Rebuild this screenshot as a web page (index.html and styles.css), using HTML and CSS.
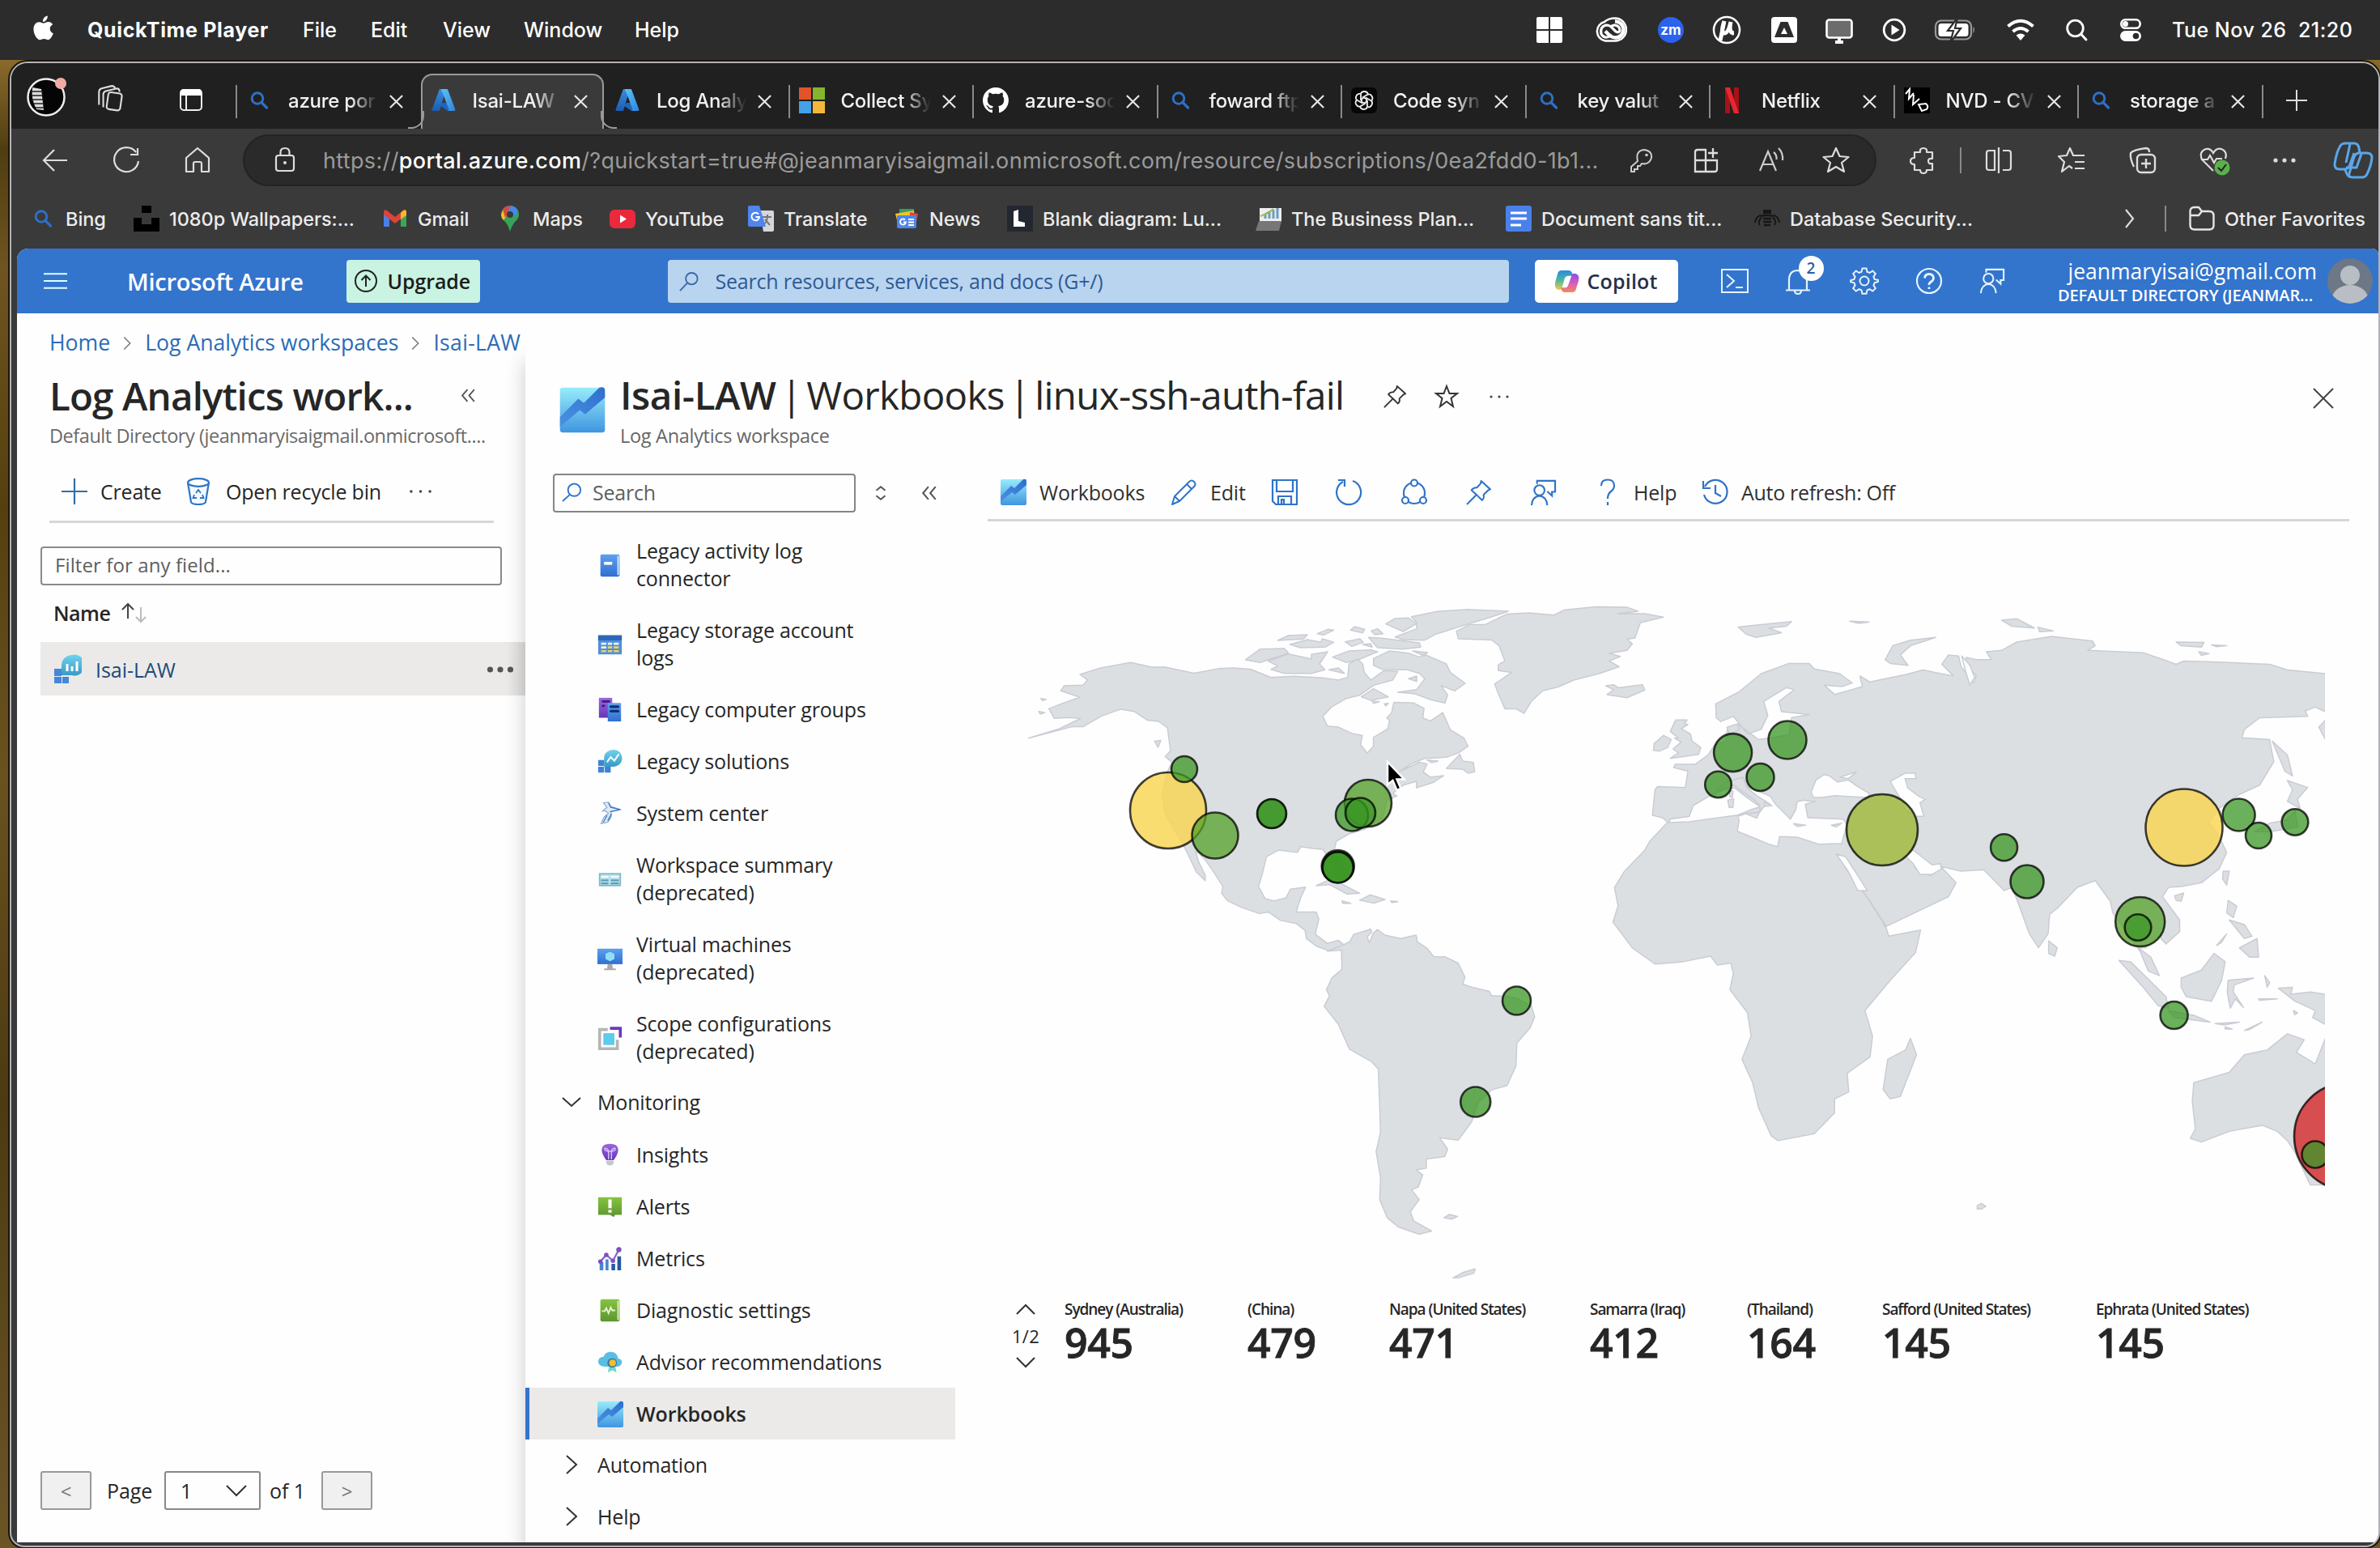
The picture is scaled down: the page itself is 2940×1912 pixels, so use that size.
FILE: index.html
```html
<!DOCTYPE html>
<html lang="en">
<head>
<meta charset="utf-8">
<title>Isai-LAW | Workbooks - Microsoft Azure</title>
<link rel="stylesheet" href="styles.css">
</head>
<body>
<svg class="defs" width="0" height="0" aria-hidden="true">
  <defs>
    <linearGradient id="wbg" x1="0" y1="0" x2="0" y2="1"><stop offset="0" stop-color="#97ecfb"/><stop offset="1" stop-color="#3f95e0"/></linearGradient>
    <linearGradient id="wbl" x1="1" y1="0" x2="0" y2="1"><stop offset="0" stop-color="#2f6fd0"/><stop offset="1" stop-color="#4a92e0"/></linearGradient>
    <linearGradient id="azl" x1="0" y1="0" x2="0" y2="1"><stop offset="0" stop-color="#3a8ee0"/><stop offset="1" stop-color="#1b5cb0"/></linearGradient>
    <linearGradient id="azr" x1="0" y1="0" x2="1" y2="1"><stop offset="0" stop-color="#5ec3f4"/><stop offset="1" stop-color="#2f83dd"/></linearGradient>
    <linearGradient id="blu" x1="0" y1="0" x2="0" y2="1"><stop offset="0" stop-color="#5ea0ef"/><stop offset="1" stop-color="#2f6fd0"/></linearGradient>
    <linearGradient id="cyn" x1="0" y1="0" x2="0" y2="1"><stop offset="0" stop-color="#6fd3ef"/><stop offset="1" stop-color="#389ac4"/></linearGradient>
    <linearGradient id="grn" x1="0" y1="0" x2="0" y2="1"><stop offset="0" stop-color="#86c440"/><stop offset="1" stop-color="#5d9431"/></linearGradient>
    <linearGradient id="pur" x1="0" y1="0" x2="0" y2="1"><stop offset="0" stop-color="#9a66e0"/><stop offset="1" stop-color="#6437b8"/></linearGradient>
    <linearGradient id="cop1" x1="0" y1="0" x2="0" y2="1"><stop offset="0" stop-color="#2b8be0"/><stop offset=".5" stop-color="#49b8a0"/><stop offset="1" stop-color="#f5cc4a"/></linearGradient>
    <linearGradient id="cop2" x1="0" y1="0" x2="0" y2="1"><stop offset="0" stop-color="#8a4fe8"/><stop offset=".5" stop-color="#d65bc0"/><stop offset="1" stop-color="#f48a5a"/></linearGradient>
    <symbol id="x" viewBox="0 0 20 20"><path d="M2 2 18 18M18 2 2 18" fill="none" stroke="#e8e8e8" stroke-width="2.2"/></symbol>
    <symbol id="mag" viewBox="0 0 22 22"><circle cx="9" cy="8.500" r="6.800" fill="none" stroke="#2f6fc4" stroke-width="3"/><path d="M14 13.500 20.500 20" stroke="#2f6fc4" stroke-width="3.200" stroke-linecap="round"/></symbol>
    <symbol id="az" viewBox="0 0 30 30"><path d="M10 1h8L10 28H2Q0 28 .7 25.800Z" fill="url(#azl)"/><path d="M14 18H24L27 28H20L10 21Z" fill="#1d66c0"/><path d="M12 1h7q1 0 1.400 1.200L29.300 26Q30 28 28 28H20.500Q22 27.500 21.300 25.500Z" fill="url(#azr)"/></symbol>
    <symbol id="wb" viewBox="0 0 34 34"><rect x="1" y="1" width="32" height="32" rx="2" fill="url(#wbg)"/><path d="M1 22 14 9 18 12 29 1Q33 0 33 3V8L19 20 15 17 1 29Z" fill="url(#wbl)"/></symbol>
    <symbol id="chr" viewBox="0 0 16 24"><path d="M3 2 13 12 3 22" fill="none" stroke="currentColor" stroke-width="2"/></symbol>
    <symbol id="dbl" viewBox="0 0 18 18"><path d="M8 2 2 9l6 7M16 2l-6 7 6 7" fill="none" stroke="#555" stroke-width="1.800"/></symbol>
    <symbol id="pin" viewBox="0 0 32 32"><path d="M19 2 30 12 27 13.500 22 18.500Q23 23 20 25L14.500 19.500 7.500 13Q10 9.500 14 10L18.500 5Z" fill="none" stroke="currentColor" stroke-width="2" stroke-linejoin="round"/><path d="M13 19 2 30" stroke="currentColor" stroke-width="2"/></symbol>
    <symbol id="fb" viewBox="0 0 34 34"><circle cx="12" cy="14" r="6.500" fill="none" stroke="currentColor" stroke-width="2.200"/><path d="M2 33Q3 22 12 21 21 22 22 33M9 6V2H32V16H28V21L22 15.500" fill="none" stroke="currentColor" stroke-width="2.200"/></symbol>
  </defs>
</svg>

<header class="menubar">
  <svg class="apple" viewBox="0 0 28 32"><path fill="#fff" d="M19.500 0c.2 2.300-.7 4.200-1.900 5.500-1.200 1.400-2.900 2.200-4.300 2-.2-2.200.8-4.100 1.900-5.300C16.400.9 18.200.1 19.500 0ZM26 11c-2.500 1.500-3.600 3.200-3.500 5.600.1 2.800 1.600 4.800 4.200 5.900-1 2.900-3.600 8.200-6.600 8.200-1.900 0-2.700-1.200-5.200-1.200-2.400 0-3.400 1.200-5.200 1.200C6 30.700 1.500 23.500 1.500 17.200c0-5.800 3.500-9.200 7.200-9.200 2.400 0 4 1.400 5.800 1.400S18 7.800 20.600 7.800c2 0 4.100 1.200 5.400 3.200Z"/></svg>
  <b>QuickTime Player</b><span>File</span><span>Edit</span><span>View</span><span>Window</span><span>Help</span>
  <svg viewBox="0 0 40 40"><path fill="#fff" d="M4 6q0-2 2-2h13v15H4ZM21 4h13q2 0 2 2v13H21ZM4 21h15v15H6q-2 0-2-2ZM21 21h15v13q0 2-2 2H21Z"/></svg>
  <svg viewBox="0 0 40 40"><path d="M25 5.500A14 14 0 0 1 25 33.500H13A12 12 0 0 1 12 10Q17 5.500 25 5.500Z" fill="none" stroke="#fff" stroke-width="2.500"/><path d="M25 9.500a10 10 0 0 1 1 20q-5 0-9-4l-4-4" fill="none" stroke="#fff" stroke-width="4.500"/><path d="M20 27q-8 5-12-2-2-9 6-11 5 0 8 4l4 4q3 2 5-1 0-6-6-7-4 0-6 3" fill="none" stroke="#fff" stroke-width="3.200"/></svg>
  <svg viewBox="0 0 40 40"><circle cx="20" cy="20" r="16" fill="#2b62ee"/><text x="20" y="26" text-anchor="middle" font-size="17" font-weight="700" fill="#fff">zm</text></svg>
  <svg viewBox="0 0 40 40"><circle cx="20" cy="20" r="16" fill="none" stroke="#fff" stroke-width="2.500"/><path d="M17 9 12 33M17 9q-5 15 0 15t8-14m0 0q-3 14 4 14" fill="none" stroke="#fff" stroke-width="5"/></svg>
  <svg viewBox="0 0 40 40"><rect x="4" y="4" width="32" height="32" rx="4" fill="#fff"/><path d="M15.500 10h9L32 29H8Z" fill="#2c2c2c"/><path d="M20 17 24 25H16Z" fill="#fff"/></svg>
  <svg viewBox="0 0 40 40"><rect x="4.500" y="7.500" width="31" height="22" rx="3" fill="#6c6c6c" stroke="#fff" stroke-width="2.600"/><path d="M15 35h10M20 30v5" stroke="#fff" stroke-width="4"/></svg>
  <svg viewBox="0 0 40 40"><circle cx="20" cy="20" r="12.800" fill="none" stroke="#fff" stroke-width="2.800"/><path d="M16.500 13.500 26.500 20 16.500 26.500Z" fill="#fff"/></svg>
  <svg viewBox="0 0 52 40"><rect x="2" y="8.500" width="44" height="23" rx="7" fill="none" stroke="#999" stroke-width="2.200"/><path d="M48.500 15.500q3 4.500 0 9Z" fill="#999"/><rect x="5.500" y="12" width="37" height="16" rx="3.500" fill="#fff"/><path d="M29 5 17 21h7L20 36 33 18h-7Z" fill="#fff" stroke="#2c2c2c" stroke-width="2.200"/></svg>
  <svg viewBox="0 0 40 40"><g fill="none" stroke="#fff" stroke-width="4"><path d="M4.500 15.500Q20 2 35.500 15.500"/><path d="M10.500 22Q20 14 29.500 22"/></g><path d="M14.500 26.500q5.500-4 11 0L20 33Z" fill="#fff"/></svg>
  <svg viewBox="0 0 40 40"><circle cx="18.500" cy="18" r="9.800" fill="none" stroke="#fff" stroke-width="2.800"/><path d="M25.500 25 32 32" stroke="#fff" stroke-width="3" stroke-linecap="round"/></svg>
  <svg viewBox="0 0 40 40"><rect x="8.300" y="7.300" width="23.400" height="10.500" rx="5.200" fill="none" stroke="#fff" stroke-width="2.600"/><circle cx="13.500" cy="12.500" r="3.500" fill="#fff"/><rect x="7" y="21" width="26" height="13" rx="6.500" fill="#fff"/><circle cx="26.500" cy="27.500" r="3.800" fill="#2c2c2c"/></svg>
  <span class="clock">Tue Nov 26&nbsp; 21:20</span>
</header>

<div class="desktop">
<div class="window">
  <div class="tabstrip">
    <svg viewBox="0 0 50 50" class="me"><circle cx="25" cy="26" r="22.500" fill="#050505" stroke="#eee" stroke-width="2.500"/><path d="M8 14 19 16 22 42 13 41Q6 28 8 14Z" fill="#ddd"/><path d="M7 19h14M7 24h14M7 29h15M9 34h13M12 39h10" stroke="#222" stroke-width="1.600"/><circle cx="43" cy="9" r="7" fill="#f0aba5"/></svg>
    <svg viewBox="0 0 36 36"><g fill="none" stroke="#ddd" stroke-width="2"><rect x="15" y="11" width="16" height="20" rx="3" transform="rotate(8 23 20)"/><path d="M10 28V13q0-3 3-4l13-3q3 0 3 4M5 25V10q0-3 3-4l12-3q3 0 4 3"/></g></svg>
    <svg viewBox="0 0 36 36"><rect x="5" y="6" width="26" height="25" rx="4" fill="none" stroke="#eee" stroke-width="2"/><path d="M5 13V9q0-4 4-4h18q4 0 4 4v4Z" fill="#fff"/><path d="M12 13V31" stroke="#eee" stroke-width="2"/></svg>
    <div class="tab sep"><svg class="sm"><use href="#mag"/></svg><span>azure por</span><svg class="x"><use href="#x"/></svg></div>
    <div class="tab active"><svg><use href="#az"/></svg><span>Isai-LAW</span><svg class="x"><use href="#x"/></svg></div>
    <div class="tab"><svg><use href="#az"/></svg><span>Log Analy</span><svg class="x"><use href="#x"/></svg></div>
    <div class="tab sep"><svg class="lg" viewBox="0 0 32 32"><path fill="#e2532a" d="M0 0h15v15H0z"/><path fill="#85b52c" d="M17 0h15v15H17z"/><path fill="#45a0e8" d="M0 17h15v15H0z"/><path fill="#f3b73a" d="M17 17h15v15H17z"/></svg><span>Collect Sy</span><svg class="x"><use href="#x"/></svg></div>
    <div class="tab sep"><svg class="lg" viewBox="0 0 16 16"><path fill="#fff" d="M8 0C3.580 0 0 3.580 0 8c0 3.540 2.290 6.530 5.470 7.590.4.070.55-.17.55-.38 0-.19-.01-.82-.01-1.490-2.010.37-2.530-.49-2.690-.94-.09-.23-.48-.94-.82-1.130-.28-.15-.68-.52-.01-.53.63-.01 1.080.58 1.230.82.72 1.210 1.870.87 2.330.66.070-.52.28-.87.51-1.070-1.780-.2-3.640-.89-3.640-3.950 0-.87.31-1.590.82-2.150-.08-.2-.36-1.020.08-2.120 0 0 .67-.21 2.200.82.64-.18 1.320-.27 2-.27s1.360.09 2 .27c1.530-1.040 2.200-.82 2.200-.82.44 1.100.16 1.920.08 2.120.51.56.82 1.270.82 2.150 0 3.070-1.870 3.750-3.650 3.950.29.25.54.73.54 1.480 0 1.070-.01 1.930-.01 2.200 0 .21.15.46.55.38A8.010 8.010 0 0 0 16 8c0-4.420-3.580-8-8-8"/></svg><span>azure-soc</span><svg class="x"><use href="#x"/></svg></div>
    <div class="tab sep"><svg class="sm"><use href="#mag"/></svg><span>foward ftp</span><svg class="x"><use href="#x"/></svg></div>
    <div class="tab sep"><svg class="lg" viewBox="0 0 32 32"><rect width="32" height="32" rx="6" fill="#070707"/><g fill="none" stroke="#eee" stroke-width="1.800"><path id="pet" d="M16 12.500 12 15V9q0-4 4.500-4 3 0 4.500 3"/><use href="#pet" transform="rotate(60 16 16)"/><use href="#pet" transform="rotate(120 16 16)"/><use href="#pet" transform="rotate(180 16 16)"/><use href="#pet" transform="rotate(240 16 16)"/><use href="#pet" transform="rotate(300 16 16)"/></g></svg><span>Code syn</span><svg class="x"><use href="#x"/></svg></div>
    <div class="tab sep"><svg class="sm"><use href="#mag"/></svg><span>key valut</span><svg class="x"><use href="#x"/></svg></div>
    <div class="tab sep"><svg class="lg" viewBox="0 0 32 32"><path d="M10 0v32M21 0v32" stroke="#a51218" stroke-width="6"/><path d="M7 0h6L24 32H18Z" fill="#e6282e"/></svg><span>Netflix</span><svg class="x"><use href="#x"/></svg></div>
    <div class="tab sep"><svg class="lg" viewBox="0 0 32 32"><rect width="32" height="32" fill="#000"/><path d="M2 8 7 2 6 14 12 7M12 9 11 21 19 14M18 21 22 29 28 27Q31 23 27 20Z" fill="none" stroke="#fff" stroke-width="2"/></svg><span>NVD - CV</span><svg class="x"><use href="#x"/></svg></div>
    <div class="tab sep"><svg class="sm"><use href="#mag"/></svg><span>storage a</span><svg class="x"><use href="#x"/></svg></div>
    <div class="tab sep add"><svg viewBox="0 0 28 28"><path d="M14 1V27M1 14H27" stroke="#ddd" stroke-width="2"/></svg></div>
  </div>

  <div class="toolbar">
    <div class="navbtns">
      <svg viewBox="0 0 36 36"><path d="M33 18H4M17 5 4 18 17 31" fill="none" stroke="#ddd" stroke-width="2.200"/></svg>
      <svg viewBox="0 0 36 36"><path d="M30 8A15 15 0 1 0 33 19M32 3V11H23" fill="none" stroke="#ddd" stroke-width="2.200"/></svg>
      <svg viewBox="0 0 36 36"><path d="M4 15 18 3 32 15V32H23V22q0-2-2-2H15q-2 0-2 2V32H4Z" fill="none" stroke="#ddd" stroke-width="2.200" stroke-linejoin="round"/></svg>
    </div>
    <div class="url">
      <svg viewBox="0 0 36 36"><rect x="7" y="12" width="22" height="19" rx="3" fill="none" stroke="#ddd" stroke-width="2.200"/><path d="M12.500 12V8q0-5 5.500-5t5.500 5v4" fill="none" stroke="#ddd" stroke-width="2.200"/><circle cx="18" cy="21" r="2" fill="#ddd"/></svg>
      <p>https://<b>portal.azure.com</b>/?quickstart=true#@jeanmaryisaigmail.onmicrosoft.com/resource/subscriptions/0ea2fdd0-1b1...</p>
      <svg viewBox="0 0 36 36"><path d="M13 19Q10 6 21 5q10 1 9 10-3 9-12 7l-2 3h-3v4H9v3H5V26Z" fill="none" stroke="#ccc" stroke-width="2"/><circle cx="24" cy="11.500" r="1.800" fill="#ccc"/></svg>
      <svg viewBox="0 0 36 36"><path d="M4 32V8q0-3 3-3h10V32ZM4 18H31V29q0 3-3 3H4M17 18V32M26 3v12M20 9H32" fill="none" stroke="#ddd" stroke-width="2.300"/></svg>
      <svg viewBox="0 0 36 36"><path d="M4 31 14 7 24 31M8 23H20M21 8q4 3 3.500 9M27 3q6 6 5 15" fill="none" stroke="#ccc" stroke-width="2.200"/></svg>
      <svg viewBox="0 0 36 36"><path d="M18 3 22.500 13 33.500 14 25 21 28 32 18 26 8 32 11 21 2.500 14 13.500 13Z" fill="none" stroke="#ddd" stroke-width="2.200" stroke-linejoin="round"/></svg>
    </div>
    <div class="tools">
      <svg viewBox="0 0 36 36"><path d="M8 8h7q-1-5 4-5t4 5h7v8q-5-1-5 3t5 3v8h-7q0 4-4 4t-4-4H8v-7q-5 0-5-4t5-4Z" fill="none" stroke="#ddd" stroke-width="2.200" stroke-linejoin="round"/></svg>
      <i></i>
      <svg viewBox="0 0 36 36"><path d="M13 6H6q-3 0-3 3V27q0 3 3 3H13ZM23 6h7q3 0 3 3V27q0 3-3 3H23M18 2V34" fill="none" stroke="#ddd" stroke-width="2.200"/></svg>
      <svg viewBox="0 0 36 36"><path d="M19 28 15 25 6 32 9 20 2 13 12 12 16 3 20 12H34M22 20H34M22 28H34" fill="none" stroke="#ddd" stroke-width="2.200" stroke-linejoin="round"/></svg>
      <svg viewBox="0 0 36 36"><rect x="11" y="11" width="22" height="22" rx="5" fill="none" stroke="#ddd" stroke-width="2.400"/><path d="M22 16V28M16 22H28M7 26Q2 16 3 9 6 5 22 3q4 0 4 5" fill="none" stroke="#ddd" stroke-width="2.400"/></svg>
      <svg viewBox="0 0 40 40"><path d="M18 33 4 19Q0 9 9 6q6-1 9 5 4-7 10-5 8 3 5 12M3 19h8l3-5 5 9 3-5h7" fill="none" stroke="#ddd" stroke-width="2.200"/><circle cx="29" cy="29" r="9.500" fill="#5bb04c"/><path d="M24 29l4 4 6-8" fill="none" stroke="#222" stroke-width="2"/></svg>
      <svg viewBox="0 0 36 36"><g fill="#ddd"><circle cx="7" cy="18" r="2.600"/><circle cx="18" cy="18" r="2.600"/><circle cx="29" cy="18" r="2.600"/></g></svg>
      <svg viewBox="0 0 50 46"><g fill="none" stroke="#5aa6ea" stroke-width="3"><path d="M14 34H8q-6 0-6-6Q4 13 9 5q2-3 6-3H26q5 0 6 6l1 6H42q6 0 6 6-1 10-6 20-2 4-6 4H24q-6 0-8-7Z"/><path d="M14 34Q19 34 21 28L26 14M21 3 16 26M32 14Q27 14 25 22L19 43M35 15 29 32H16"/></g></svg>
    </div>
  </div>

  <div class="bookmarks">
    <a><svg viewBox="-5 -5 32 32"><use href="#mag" width="22" height="22"/></svg>Bing</a>
    <a><svg viewBox="0 0 32 32"><path d="M10 0H22V9H10ZM0 15H10V23H22V15H32V32H0Z" fill="#000"/></svg>1080p Wallpapers:...</a>
    <a><svg viewBox="0 0 32 32"><path d="M2 8V26H9V13Z" fill="#4a7fe8"/><path d="M30 8V26H23V13Z" fill="#3aa757"/><path d="M2 8Q2 4 6 6L16 14 26 6Q30 4 30 8V11L16 22 2 11Z" fill="#dc4437"/><path d="M23 9 26 6Q30 4 30 8V12L23 17Z" fill="#f3b928"/></svg>Gmail</a>
    <a><svg viewBox="0 0 32 32"><path d="M16 32Q14 24 9 19 5 15 5 11A11 11 0 0 1 27 11Q27 16 22 20 18 25 16 32Z" fill="#37a35a"/><path d="M8 18Q5 15 5 11L8 4 14 10Z" fill="#f4bf2c"/><path d="M7 4.500A11 11 0 0 1 20 1L10 15Z" fill="#d9493f"/><path d="M17 0A11 11 0 0 1 26 7L20 15 14 6Z" fill="#4787ee"/><circle cx="16" cy="11" r="4" fill="#3a3a3a"/></svg>Maps</a>
    <a><svg viewBox="0 0 32 32"><rect y="5" width="32" height="23" rx="6" fill="#ea2a3c"/><path d="M13 11.500 21 16.500 13 21.500Z" fill="#fff"/></svg>YouTube</a>
    <a><svg viewBox="0 0 32 32"><path d="M14 6H30q2 0 2 2V30q0 2-2 2H19Z" fill="#d5d7da"/><path d="M18 14h11M24 11v3q-1 8-5 9M21 17l6 7" stroke="#777" stroke-width="2" fill="none"/><path d="M2 0H14L22 26H2q-2 0-2-2V2Q0 0 2 0Z" fill="#5085ee"/><path d="M13 10.500A4.800 4.800 0 1 0 14 14H9.500" fill="none" stroke="#fff" stroke-width="2"/></svg>Translate</a>
    <a><svg viewBox="0 0 32 32"><path d="M7 4H25V14H7Z" fill="#36a05a"/><path d="M2 10 25 6 26 18H4Z" fill="#f2c230"/><path d="M20 8 30 10 28 20H20Z" fill="#d9493f"/><rect x="4" y="12" width="24" height="16" rx="2" fill="#4f86ec"/><path d="M14 17.500a3.500 3.500 0 1 0 1 3h-3M18 17h7M18 20.500h7M18 24h7" stroke="#fff" stroke-width="1.800" fill="none"/></svg>News</a>
    <a><svg viewBox="0 0 32 32"><rect width="32" height="32" fill="#232730"/><path d="M8 7 14 5V19L22 21V26H8Z" fill="#fff"/></svg>Blank diagram: Lu...</a>
    <a><svg viewBox="0 0 32 32"><path d="M5 3H32V20H5Z" fill="#eee"/><path d="M12 16V10M17 16V8M22 16V5M27 16V3" stroke="#6f9cc0" stroke-width="3"/><path d="M6 13 16 9 22 4" stroke="#9ac04a" stroke-width="2"/><path d="M4 19H32L29 31H0Z" fill="#777"/></svg>The Business Plan...</a>
    <a><svg viewBox="0 0 32 32"><rect width="32" height="32" rx="3" fill="#4a80ea"/><path d="M6 9H26M6 16H26M6 24H19" stroke="#fff" stroke-width="3"/></svg>Document sans tit...</a>
    <a><svg viewBox="0 0 32 32"><g fill="none" stroke="#161616" stroke-width="2"><path d="M12 13Q3 10 1 21M20 13q9-3 11 8M9 14Q4 20 7 24M23 14q5 6 2 10"/><path d="M11 12H21M11 16H21M11 20H21M12 24H20" stroke-width="2.600"/></g><path d="M11 5H21V10H11Z" fill="#161616"/></svg>Database Security...</a>
    <svg class="more" viewBox="0 0 16 28"><path d="M3 3 12 14 3 25" fill="none" stroke="#ddd" stroke-width="2.200"/></svg>
    <i></i>
    <a><svg viewBox="0 0 32 32"><path d="M1.500 7q0-5 5-5H12l4 5H25q5.500 0 5.500 5.500V24q0 5.500-5.500 5.500H7Q1.500 29.500 1.500 24ZM2 12H12l4-5" fill="none" stroke="#e5e5e5" stroke-width="2.400"/></svg>Other Favorites</a>
  </div>

  <div class="page">
    <div class="azbar">
      <svg class="burger" viewBox="0 0 30 22"><path d="M0 2H30M0 11H30M0 20H30" stroke="#dff" stroke-width="2"/></svg>
      <b class="brand">Microsoft Azure</b>
      <div class="upgrade"><svg viewBox="0 0 30 30"><circle cx="15" cy="15" r="13" fill="none" stroke="#222" stroke-width="2"/><path d="M15 22V9M9.500 14 15 8.500 20.500 14" fill="none" stroke="#222" stroke-width="2"/></svg>Upgrade</div>
      <div class="azsearch"><svg viewBox="0 0 26 26"><circle cx="16" cy="9.500" r="7.500" fill="none" stroke="#3a6ba8" stroke-width="2"/><path d="M10.500 15 1 25" stroke="#3a6ba8" stroke-width="2"/></svg>Search resources, services, and docs (G+/)</div>
      <div class="copilot"><svg viewBox="0 0 34 32"><path d="M10 2H19q4 0 5 4l1 3H19q-4 0-5 4L11 24q-1 3-4 3Q1 26 2 18L5 7q1-5 5-5Z" fill="url(#cop1)"/><path d="M24 30H15q-4 0-5-4l-1-2h5q4 0 5-4L23 9q0-3 4-3 7 1 5 9L29 25q-1 5-5 5Z" fill="url(#cop2)"/></svg>Copilot</div>
      <div class="azicons">
        <svg viewBox="0 0 36 36"><path d="M2 4H34V32H2ZM8 10 17 18 8 26M19 26H28" fill="none" stroke="#e4f3fb" stroke-width="2"/></svg>
        <span class="bell"><svg viewBox="0 0 36 36"><path d="M6 29V15Q7 5 17 5 28 6 28 16V29M2 29.500H32M13 30q0 4 4 4t4-4" fill="none" stroke="#e4f3fb" stroke-width="2.200"/></svg><em>2</em></span>
        <svg viewBox="0 0 36 36"><circle cx="18" cy="18" r="5.500" fill="none" stroke="#e4f3fb" stroke-width="2"/><path d="M15.500 2.500h5l1 4.300 3 1.200 3.800-2.400 3.500 3.500-2.400 3.800 1.200 3 4.300 1v2l-4.300 1.400-1.200 3 2.400 3.800-3.500 3.500-3.800-2.400-3 1.200-1 4.300h-5l-1-4.300-3-1.200-3.800 2.400-3.500-3.500 2.400-3.800-1.200-3-4.300-1v-2l4.300-1.400 1.200-3-2.400-3.800 3.500-3.500 3.800 2.400 3-1.200Z" fill="none" stroke="#e4f3fb" stroke-width="2"/></svg>
        <svg viewBox="0 0 36 36"><circle cx="18" cy="18" r="15" fill="none" stroke="#e4f3fb" stroke-width="2.200"/><path d="M12.500 14.500Q13 9.500 18 9.500t5.500 5q0 2.500-3 4.500T18 23M18 25.500V28" fill="none" stroke="#e4f3fb" stroke-width="2.800"/></svg>
        <svg class="pale"><use href="#fb"/></svg>
      </div>
      <div class="account"><span>jeanmaryisai@gmail.com</span><small>DEFAULT DIRECTORY (JEANMAR...</small></div>
      <svg class="avatar" viewBox="0 0 56 56"><clipPath id="av"><circle cx="28" cy="28" r="28"/></clipPath><g clip-path="url(#av)"><path fill="#6c7886" d="M0 0h56v56H0z"/><circle cx="28" cy="21" r="12" fill="#b9bec5"/><ellipse cx="28" cy="52" rx="23" ry="19" fill="#b9bec5"/></g></svg>
    </div>

    <nav class="crumbs"><a>Home</a><svg><use href="#chr"/></svg><a>Log Analytics workspaces</a><svg><use href="#chr"/></svg><a>Isai-LAW</a></nav>

    <div class="blades">
      <section class="list">
        <div class="lhead"><h1>Log Analytics work...</h1><svg><use href="#dbl"/></svg></div>
        <p class="sub">Default Directory (jeanmaryisaigmail.onmicrosoft....</p>
        <div class="lbar">
          <svg viewBox="0 0 32 32"><path d="M16 0V32M0 16H32" stroke="#2f6fa8" stroke-width="2.200"/></svg><span>Create</span>
          <svg viewBox="0 0 28 34"><path d="M1 6 5 30Q6 33 14 33T23 30L27 6" fill="#f2faff" stroke="#2f74c8" stroke-width="2.200"/><ellipse cx="14" cy="6" rx="13" ry="4.800" fill="#fff" stroke="#2f74c8" stroke-width="2.200"/><path d="M11 19 14 15l3 4M9 21l-1.500 4H12M19 21l1.500 4H16" fill="none" stroke="#2f74c8" stroke-width="1.800"/></svg><span>Open recycle bin</span>
          <svg class="dots" viewBox="0 0 30 8"><g fill="#444"><circle cx="3" cy="4" r="1.800"/><circle cx="15" cy="4" r="1.800"/><circle cx="27" cy="4" r="1.800"/></g></svg>
        </div>
        <div class="filter">Filter for any field...</div>
        <div class="colhead">Name<svg viewBox="0 0 34 26"><path d="M9 20V2M2 9 9 2l7 7" fill="none" stroke="#444" stroke-width="2"/><path d="M25 6V24M19 18l6 6 6-6" fill="none" stroke="#bbb" stroke-width="2"/></svg></div>
        <div class="row"><svg class="ri" viewBox="0 0 34 36"><path d="M0 17h9v9H0zM0 27h9v8H0zM10 27h8v8h-8z" fill="#4287dc"/><path d="M22 0A12 13 0 1 1 22 25H9V13A13 13 0 0 1 22 0Z" fill="url(#cyn)"/><path d="M16 11V20M22 14V20M28 8V20" stroke="#fff" stroke-width="3"/></svg><span>Isai-LAW</span><svg class="rd" viewBox="0 0 34 10"><g fill="#555"><circle cx="4.500" cy="5" r="3.600"/><circle cx="17" cy="5" r="3.600"/><circle cx="29.500" cy="5" r="3.600"/></g></svg></div>
        <div class="pager"><button>&lt;</button><span>Page</span><div class="select">1<svg viewBox="0 0 26 16"><path d="M1 2 13 14 25 2" fill="none" stroke="#333" stroke-width="2"/></svg></div><span>of 1</span><button>&gt;</button></div>
      </section>

      <section class="blade">
        <div class="bhead">
          <svg class="bicon" viewBox="0 0 34 34" preserveAspectRatio="none"><use href="#wb"/></svg>
          <div><h2><b>Isai-LAW</b> | Workbooks | linux-ssh-auth-fail</h2><p>Log Analytics workspace</p></div>
          <div class="hicons">
            <svg><use href="#pin"/></svg>
            <svg viewBox="0 0 36 36"><path d="M18 5 21.500 14H31L23.500 20 26 30 18 24 10 30 12.500 20 5 14H14.500Z" fill="none" stroke="#333" stroke-width="2"/></svg>
            <svg viewBox="0 0 30 30"><g fill="#444"><circle cx="5" cy="15" r="1.600"/><circle cx="15" cy="15" r="1.600"/><circle cx="25" cy="15" r="1.600"/></g></svg>
            <svg class="close" viewBox="0 0 26 26"><path d="M1 1 25 25M25 1 1 25" stroke="#444" stroke-width="2"/></svg>
          </div>
        </div>
        <div class="bbody">
          <aside>
            <div class="find"><div class="box"><svg viewBox="0 0 26 26"><circle cx="16" cy="9.500" r="8" fill="none" stroke="#2f74c8" stroke-width="2"/><path d="M10.500 15.500 1 24" stroke="#2f74c8" stroke-width="2"/></svg>Search</div>
              <svg viewBox="0 0 18 18"><path d="M4 6 9 2l5 4M4 12l5 4 5-4" fill="none" stroke="#555" stroke-width="1.800"/></svg>
              <svg><use href="#dbl"/></svg></div>
            <ul>
              <li class="two"><svg viewBox="0 0 34 34"><rect x="4" y="2" width="26" height="30" rx="2" fill="url(#blu)"/><path d="M27 4H29V30H27Z" fill="#d8ecff"/><path d="M9 14H20" stroke="#fff" stroke-width="4"/></svg>Legacy activity log<br>connector</li>
              <li class="two"><svg viewBox="0 0 34 34"><rect x="1" y="4" width="32" height="26" rx="1" fill="#4f8fd8"/><path d="M1 4H33V11H1Z" fill="#2c66bc"/><g fill="#e8f2ff"><path d="M5 14h7v3H5zM14 14h6v3h-6zM22 14h7v3h-7z"/></g><path fill="#f2f2e0" d="M5 19h7v3H5z"/><g fill="#f0d060"><path d="M14 19h6v3h-6zM22 19h7v3h-7zM5 24h7v3H5zM14 24h6v3h-6zM22 24h7v3h-7z"/></g></svg>Legacy storage account<br>logs</li>
              <li><svg viewBox="0 0 34 34"><rect x="2" y="1" width="18" height="27" fill="url(#pur)"/><path d="M6 6h11M6 12h4" stroke="#3d1a80" stroke-width="3"/><rect x="14" y="8" width="18" height="25" fill="url(#blu)"/><path d="M18 13H28M18 19H28" stroke="#14306e" stroke-width="3.500" stroke-linecap="round"/></svg>Legacy computer groups</li>
              <li><svg viewBox="0 0 34 34"><path d="M1 15h8v8H1zM1 24h8v8H1zM10 24h8v8h-8z" fill="#3f82d8"/><path d="M22 1A11 11 0 1 1 22 24H9V12A13 11 0 0 1 22 1Z" fill="url(#cyn)"/><path d="M13 18 18 11 23 16 29 7" fill="none" stroke="#fff" stroke-width="2.200"/></svg>Legacy solutions</li>
              <li><svg viewBox="0 0 34 34"><path d="M8 3 15 2Q17 6 19 8L31 12 18 15Q21 21 14 29L5 31 9 22 15 17 11 14 7 14 13 9Z" fill="#dceaf6" stroke="#7fa3cc" stroke-width="1.200"/><path d="M15 3 18 9 31 12 17 15M13 20 8 29M19 18 14 27" fill="none" stroke="#3f76c0" stroke-width="1.400"/></svg>System center</li>
              <li class="two"><svg viewBox="0 0 34 34"><path d="M2 8H32V26H2Z" fill="#7fb9cc"/><path d="M4 10H30V24H4Z" fill="#b9e2ee"/><path d="M5 13H15M18 13H29" stroke="#fff" stroke-width="2"/><path d="M5 18H15M18 18H29M5 22H15M18 22H29" stroke="#5e9db2" stroke-width="2.500"/></svg>Workspace summary<br>(deprecated)</li>
              <li class="two"><svg viewBox="0 0 34 34"><rect y="3" width="34" height="21" fill="url(#blu)"/><path d="M17 7 23 10V17L17 20 11 17V10Z" fill="#8fe0f5"/><path d="M14 24H20L21 30H25V32H9V30H13Z" fill="#aaa"/></svg>Virtual machines<br>(deprecated)</li>
              <li class="two"><svg viewBox="0 0 34 34"><path d="M14 5H3V31H27V19" fill="none" stroke="#b5b5b5" stroke-width="4"/><path d="M17 3.500H31V16" fill="none" stroke="#6b39c0" stroke-width="4"/><rect x="8" y="10" width="15" height="16" fill="#5ccbec"/></svg>Scope configurations<br>(deprecated)</li>
              <li class="grp"><svg viewBox="0 0 24 24"><path d="M1 7 12 17 23 7" fill="none" stroke="#333" stroke-width="2"/></svg>Monitoring</li>
              <li><svg viewBox="0 0 34 34"><path d="M6 9Q7 2 17 2T28 9Q29 15 22 24H12Q5 15 6 9Z" fill="url(#pur)"/><path d="M12 25H22V28L20 31H14L12 28Z" fill="#c6c6cc"/><path d="M15 23V12Q9 12 10 8q4 0 5 4h4q1-4 5-4 1 4-5 4V23" fill="none" stroke="#d8c4f6" stroke-width="1.600"/></svg>Insights</li>
              <li><svg viewBox="0 0 34 34"><path d="M1 4H33V28H24L22 31 17 28H1Z" fill="url(#grn)"/><path d="M17 7V19M17 21.500V25" stroke="#fff" stroke-width="4.500"/></svg>Alerts</li>
              <li><svg viewBox="0 0 34 34"><path d="M3 22h5v11H3zM11 18h4v15h-4z" fill="#4a86d6"/><path d="M19 24h5v9h-5zM27 14h5v19h-5z" fill="#245aa0"/><path d="M4 21 12 12 21 20 29 5" fill="none" stroke="#8a62cc" stroke-width="2.500"/><g fill="#7a4fc4"><circle cx="4" cy="21" r="3"/><circle cx="12" cy="12" r="3"/><circle cx="21" cy="20" r="3"/><circle cx="29" cy="5" r="3.500"/></g></svg>Metrics</li>
              <li><svg viewBox="0 0 34 34"><rect x="4" y="2" width="26" height="30" rx="2" fill="url(#grn)"/><path d="M27 4H29V30H27Z" fill="#e0f0c8"/><path d="M6 18H10L12 14 15 21 18 13 20 17H24" fill="none" stroke="#e8f6d4" stroke-width="2"/></svg>Diagnostic settings</li>
              <li><svg viewBox="0 0 34 34"><path d="M9 23Q1 22 1 16 2 10 8 10 11 2 19 3q8 1 9 9 6 1 5 6-1 5-7 5Z" fill="#59bfe2"/><path d="M16 22 14 31 20 28 26 31 24 22Z" fill="#6fdac8"/><circle cx="20" cy="18" r="6.500" fill="#3d7a9c"/><circle cx="20.500" cy="18" r="4.500" fill="#f3bd33"/></svg>Advisor recommendations</li>
              <li class="on"><svg class="wide" viewBox="0 0 34 34"><use href="#wb"/></svg>Workbooks</li>
              <li class="grp"><svg viewBox="0 0 24 24"><path d="M6 1 18 12 6 23" fill="none" stroke="#333" stroke-width="2"/></svg>Automation</li>
              <li class="grp"><svg viewBox="0 0 24 24"><path d="M6 1 18 12 6 23" fill="none" stroke="#333" stroke-width="2"/></svg>Help</li>
            </ul>
          </aside>
          <main>
            <div class="cmds">
              <svg><use href="#wb"/></svg><span>Workbooks</span>
              <svg viewBox="0 0 34 34"><path d="M2 32 5 22 23 4q3-3 6 0t0 6L11 28ZM5 22l6 6M20 7l6 6" fill="none" stroke="#2f74c8" stroke-width="2" stroke-linejoin="round"/></svg><span>Edit</span>
              <svg viewBox="0 0 34 34"><path d="M2 2H32V32H6L2 28ZM7 2V16H27V2M9 32V22H25V32M13 32V26H16V32" fill="none" stroke="#2f74c8" stroke-width="2.200"/></svg>
              <svg viewBox="0 0 34 34"><path d="M21 3A15 15 0 1 1 9 4M3 2H11V10" fill="none" stroke="#2f74c8" stroke-width="2.200"/></svg>
              <svg viewBox="0 0 34 34"><circle cx="17" cy="18" r="13" fill="none" stroke="#2f74c8" stroke-width="2.200"/><g fill="#fff" stroke="#2f74c8" stroke-width="2.200"><circle cx="17" cy="5.500" r="4"/><circle cx="6" cy="27" r="4"/><circle cx="28" cy="27" r="4"/></g></svg>
              <svg><use href="#pin"/></svg>
              <svg><use href="#fb"/></svg>
              <svg viewBox="0 0 34 34"><path d="M9 9Q9 1.500 17 1.500T25 9q0 4-4 7t-4 9M17 29V33" fill="none" stroke="#2f74c8" stroke-width="2.200"/></svg><span>Help</span>
              <svg viewBox="0 0 34 34"><path d="M4 10A14.500 14.500 0 1 1 3 20M2 3V12H11M17 8V18L24 22" fill="none" stroke="#2f74c8" stroke-width="2.200"/></svg><span>Auto refresh: Off</span>
            </div>
            <svg class="map" viewBox="1220 680 1652 910">
              <g class="land" transform="translate(1220 420) scale(.54847 .47194)">
                <path d="M92 1042 160 1018 210 990 180 988 150 990 138 965 170 950 208 935 165 918 172 905 215 903 225 890 208 875 255 858 322 844 370 856 400 856 465 872 520 860 555 858 593 862 638 883 690 880 754 884 790 890 811 883 814 848 833 835 845 848 848 869 863 890 893 865 924 867 912 890 869 904 839 929 808 938 775 960 755 985 765 1010 790 1013 820 1029 844 1035 840 1059 855 1081 869 1063 869 1040 902 1017 905 995 899 989 910 975 915 948 960 950 983 964 980 989 997 997 1025 975 1042 1020 1073 1042 1082 1063 1060 1081 1033 1092 984 1095 954 1109 927 1130 972 1105 990 1109 981 1130 997 1144 1027 1140 1003 1158 966 1172 966 1155 936 1165 912 1187 922 1193 899 1204 890 1250 850 1280 815 1292 785 1312 780 1340 800 1375 808 1405 795 1412 770 1360 755 1333 730 1330 705 1326 698 1341 655 1335 628 1352 618 1400 610 1430 625 1462 645 1468 672 1460 682 1437 716 1432 705 1460 695 1497 740 1497 746 1515 738 1555 765 1579 790 1571 810 1590 770 1599 740 1586 718 1566 715 1545 695 1527 660 1519 632 1497 612 1501 570 1484 540 1467 527 1448 530 1430 505 1385 490 1360 468 1335 475 1365 490 1400 490 1415 470 1392 455 1355 440 1320 400 1240 393 1190 405 1130 415 1105 400 1090 412 1075 405 1015 385 998 360 995 330 972 300 966 255 985 215 1012 190 1012Z"/>
                <path d="M120 938l12 2-8 4ZM115 972l14 3-10 4ZM376 1050 390 1048 384 1066ZM740 1428 765 1415 800 1425 838 1448 810 1450 770 1425ZM838 1466 862 1452 895 1464 870 1474ZM798 1468 818 1474 800 1474ZM908 1468 924 1470 910 1472Z"/>
                <path d="M1056 762 1085 745 1120 745 1170 717 1220 714 1275 720 1300 706 1370 698 1440 699 1465 710 1420 716 1480 716 1522 725 1470 740 1458 780 1440 783 1452 795 1440 812 1400 820 1425 828 1400 840 1422 855 1380 872 1320 890 1285 908 1250 918 1225 945 1208 977 1190 965 1165 965 1150 925 1142 900 1180 870 1150 865 1150 850 1165 840 1152 800 1135 785 1060 782Z"/>
                <path d="M1392 905 1410 902 1420 910 1475 902 1480 916 1440 936 1395 928 1410 915Z"/>
              </g>
              <g class="land" transform="translate(1520 740) scale(.33333)">
                <path d="M55 225 110 185 200 183 215 200 110 235ZM140 230 215 203 300 222 300 205 360 195 330 240 350 262 300 275 200 275 150 260 175 248ZM175 153 215 135 285 132 270 148ZM220 168 285 150 335 160 340 147 382 160 350 178 260 180ZM322 128 360 112 382 115 345 133ZM378 215 440 192 520 188 545 195 480 222 430 235ZM365 262 400 255 422 275ZM445 115 460 102 497 112 490 125ZM425 158 480 147 492 160 450 175ZM522 118 545 110 565 128 535 132ZM512 142 560 145 700 162 705 178 640 185 545 180ZM490 168 520 165 525 178ZM575 92 610 72 660 70 690 90 640 120ZM670 65 770 45 880 38 1030 45 960 68 860 98 760 130 720 152 640 150 610 140 690 110 690 85ZM530 220 590 192 660 200 700 215 720 205 800 240 815 272 870 312 830 340 780 320 805 355 795 385 740 372 680 350 620 345 690 335 720 295 700 275 655 262 560 260 530 245ZM675 192 730 198 720 210ZM660 295 690 285 690 305ZM485 362 530 332 585 362 520 375ZM525 378 552 380 530 386ZM570 388 585 386 576 396ZM800 628 850 575 860 600 900 605 905 640 880 645 860 630ZM728 596 770 600 745 606Z"/>
              </g>
              <g class="land" transform="translate(1220 1100) scale(.54847 .40816)">
                <path d="M765 183 800 165 815 155 825 132 860 118 862 115 865 125 855 140 860 158 868 130 878 118 895 135 930 145 965 135 968 155 990 175 1005 200 1030 200 1060 220 1075 262 1070 283 1090 292 1130 305 1135 318 1165 320 1190 325 1225 350 1232 382 1222 415 1192 462 1190 530 1170 590 1135 603 1105 640 1090 700 1060 755 1018 748 1036 782 1030 805 988 812 988 840 965 845 980 860 970 897 955 905 972 935 952 972 960 1000 1000 1030 972 1040 925 1018 900 990 883 935 885 870 875 790 885 730 880 540 865 518 815 480 790 405 758 350 770 318 763 300 775 265 798 238 797 180Z"/>
                <path d="M1028 990 1040 980 1058 986 1045 994ZM1048 1172 1070 1156 1098 1145 1095 1158 1060 1172Z"/>
              </g>
              <g class="land" transform="translate(1960 700) scale(.625 .57398)">
                <path d="M160 550 150 540 130 535 135 480 140 473 195 475 200 440 172 432 175 425 215 425 240 405 252 385 275 375 278 350 300 340 325 360 340 372 400 362 405 325 440 318 385 312 380 290 410 265 395 260 350 290 358 320 345 350 318 360 290 322 265 333 256 325 255 295 300 270 345 230 400 208 440 208 450 220 500 230 525 250 505 258 470 255 490 275 545 258 540 235 560 248 630 232 665 222 700 230 725 235 702 210 715 190 735 192 740 215 765 250 770 235 750 210 750 195 770 200 800 200 790 183 820 180 850 162 920 150 1000 160 1005 170 990 180 1100 185 1140 200 1165 210 1180 203 1250 205 1350 210 1385 222 1460 230V312L1440 302 1420 310 1425 322 1330 325 1300 350 1295 368 1350 372 1358 420 1330 470 1290 490 1250 520 1230 550 1250 580 1265 615 1250 650 1215 680 1175 688 1150 690 1138 710 1172 760 1172 785 1145 812 1135 800 1135 790 1105 820 1090 820 1115 840 1132 880 1110 870 1095 830 1070 790 1040 745 1035 720 1005 675 970 690 930 735 915 748 912 790 893 820 875 790 850 715 840 690 825 697 785 652 740 655 700 645 670 640 640 620 650 650 680 665 700 645 730 680 715 710 590 775 583 760 500 620 512 650 560 720 590 770 597 795 660 782 650 830 600 890 550 955 565 1010 560 1055 515 1090 518 1130 490 1145 490 1175 450 1220 378 1235 365 1225 340 1165 328 1110 307 1060 325 1010 318 960 283 910 290 875 285 853 258 857 245 838 190 850 135 855 90 820 52 765 62 730 55 690 75 655 115 610 125 590Z"/>
                <path d="M300 130 340 125 405 118 395 128 360 132 385 142 335 152 315 145ZM520 117l38 2-20 3ZM590 200 605 170 640 158 690 152 640 170 620 190 635 212 600 208ZM820 115 850 112 885 132 840 128ZM892 130 922 138 895 140ZM1165 162 1220 163 1215 173 1175 170ZM1235 168l30 2-20 2ZM1210 183l20 4-15 4ZM1355 375 1385 405 1395 450 1380 440ZM1385 460 1425 475 1405 500 1410 520 1385 505 1395 480ZM1400 525 1405 560 1350 570 1320 570 1350 552 1385 545ZM1447 345 1460 330V372ZM1258 655 1270 655 1265 685 1257 672ZM1162 708 1180 702 1175 720 1165 718ZM913 805 930 820 925 838 913 832ZM1268 718 1285 730 1278 755 1265 745ZM1270 760 1300 770 1315 795 1300 800 1285 780ZM1290 820 1325 800 1328 840 1310 840ZM1245 815 1265 790 1255 808ZM1175 885 1215 868 1240 832 1262 850 1255 890 1235 935 1185 925 1175 905ZM1052 847 1075 850 1145 925 1150 950 1130 945 1100 905ZM1150 955 1200 965 1232 980 1160 970ZM1242 983 1290 980 1260 986ZM1300 998 1335 980 1310 996ZM1262 990l14 5-14 0ZM1268 890 1318 885 1280 900 1278 915 1298 948 1282 930 1272 950 1266 915ZM1340 880 1350 895 1345 905ZM1328 930 1365 930 1330 933ZM1367 907 1395 905 1392 920 1430 915 1460 920V985L1435 970 1440 955 1400 935ZM1397 955l8 5-6 4ZM640 1015 652 1050 620 1140 600 1145 586 1125 595 1060 630 1040ZM1200 1110 1270 1088 1300 1050 1345 1040 1385 1005 1418 1018 1403 1045 1440 1070 1460 1015V1330H1430L1400 1260 1385 1235 1365 1215 1335 1202 1270 1215 1215 1238 1193 1230 1203 1210 1197 1150ZM772 1375l8-5 9 6-8 6h-9Z"/>
              </g>
              <g class="sea" transform="translate(2020 760) scale(.33333)">
                <path d="M125 768 130 755 200 745 215 705 270 672 330 645 370 640 400 665 470 715 460 730 410 735 380 745 385 760 378 800 440 825 500 850 528 857 535 820 600 822 680 848 765 845 785 775 770 755 640 750 630 700 670 690 640 688 625 685 600 690 595 720 575 755 520 700 500 670 440 645 410 625 440 665 505 705 460 710 430 720 380 740 200 765Z"/>
                <path d="M652 655 670 610 700 590 720 595 750 618 790 610 820 632 868 660 860 675 800 672 740 668 690 675 660 675ZM758 600 820 580 790 605ZM945 615 1000 585 1038 585 1040 605 1000 605 1010 640 1050 670 1075 682 1055 695 1070 745 1040 745 1000 720 990 690 965 650ZM745 885 780 895 860 1020 825 1020 790 950ZM1030 870 1100 925 1130 920 1135 940 1100 960 1055 960 1030 920 1000 890ZM1210 150 1240 185 1258 230 1240 258 1225 210Z"/>
              </g>
              <g class="land" transform="translate(2020 760) scale(.33333)">
                <path d="M150 388 192 388 182 402 195 405 170 420 205 440 210 465 243 490 235 515 130 530 160 510 140 495 170 470 145 455 160 455 130 430ZM70 475 105 445 133 460 120 490 90 503 68 500ZM340 415 380 402 385 425 350 440ZM350 650 362 650 360 675 350 672ZM343 685 365 680 362 712 348 712ZM410 735 460 730 450 752ZM587 772 632 778 600 782ZM727 778 765 770 745 784Z" />
                <path d="M300 652 365 628 400 655 440 682 462 705 462 728 480 705 478 692 500 700 450 668 415 640 400 600 330 620Z" />
              </g>
              <g class="dots">
                <circle class="y" cx="1443" cy="1001" r="47"/><circle class="l" cx="1501" cy="1032" r="28.500"/><circle class="g" cx="1463" cy="950" r="16"/>
                <circle class="g" cx="1571" cy="1005" r="17.500"/><circle class="g" cx="1571" cy="1005" r="18"/>
                <circle class="l" cx="1690" cy="992" r="29"/><circle class="g" cx="1670" cy="1006.500" r="20"/><circle class="g" cx="1680.500" cy="1004" r="18.500"/>
                <circle class="g" cx="1652.700" cy="1070" r="20"/><circle class="g" cx="1652.700" cy="1071" r="19"/><circle class="g" cx="1652.700" cy="1071.500" r="19"/>
                <circle class="g" cx="1873.500" cy="1236" r="17.500"/><circle class="g" cx="1822.700" cy="1361" r="18.500"/>
                <circle class="g" cx="2140.600" cy="929.600" r="23.500"/><circle class="g" cx="2208" cy="914" r="23.500"/><circle class="g" cx="2122.500" cy="969" r="16.300"/><circle class="g" cx="2174.500" cy="960" r="17"/>
                <circle class="o" cx="2325" cy="1025" r="44"/><circle class="g" cx="2475.600" cy="1046.700" r="16.500"/><circle class="g" cx="2504" cy="1089" r="20.500"/>
                <circle class="y" cx="2698" cy="1022" r="47.500"/><circle class="g" cx="2765.600" cy="1006.500" r="20"/><circle class="g" cx="2790" cy="1032" r="16"/><circle class="g" cx="2835" cy="1015.500" r="16.300"/>
                <circle class="l" cx="2643.700" cy="1138.500" r="30.500"/><circle class="g" cx="2641" cy="1145.500" r="16.300"/><circle class="g" cx="2685.600" cy="1254" r="17"/>
                <circle class="r" cx="2900" cy="1403.500" r="66"/><circle class="g" cx="2860" cy="1426" r="16.500"/>
              </g>
              <path d="M1714 941V969l6.500-5 5 12 5-2-5-11.500h9Z" fill="#000" stroke="#fff" stroke-width="2.500"/>
            </svg>
            <div class="stats">
              <div class="pg"><svg viewBox="0 0 24 14"><path d="M1 13 12 2 23 13" fill="none" stroke="#333" stroke-width="2"/></svg><span>1/2</span><svg viewBox="0 0 24 14"><path d="M1 1 12 12 23 1" fill="none" stroke="#333" stroke-width="2"/></svg></div>
              <div><small>Sydney (Australia)</small><b>945</b></div>
              <div><small>(China)</small><b>479</b></div>
              <div><small>Napa (United States)</small><b>471</b></div>
              <div><small>Samarra (Iraq)</small><b>412</b></div>
              <div><small>(Thailand)</small><b>164</b></div>
              <div><small>Safford (United States)</small><b>145</b></div>
              <div><small>Ephrata (United States)</small><b>145</b></div>
            </div>
          </main>
        </div>
      </section>
    </div>
  </div>
</div>
</div>
</body>
</html>
```
FILE: styles.css
```css
* { box-sizing: border-box; margin: 0; padding: 0; }
html, body { width: 2940px; height: 1912px; overflow: hidden; }
body { display: flex; flex-direction: column; font-family: "Open Sans", "Noto Sans", sans-serif; font-size: 25px; color: #262626; background: #2c2c2c; white-space: nowrap; }
svg { display: block; flex: none; }
.defs { position: absolute; }

/* macOS menu bar */
.menubar { height: 74px; flex: none; display: grid; align-items: center; padding-left: 40px; background: #2c2c2c; color: #fff; font: 500 25px Inter, sans-serif;
  grid-template-columns: 68px 266px 84px 89px 100px 137px 1110px 76px 74px 69px 71px 68px 68px 69px 87px 69px 67px 71px 1fr; }
.menubar svg { height: 40px; width: 40px; }
.menubar svg:nth-of-type(9) { width: 52px; }
.menubar .apple { width: 27px; height: 32px; margin-top: -4px; }
.menubar b { font-weight: 700; letter-spacing: .65px; }
.menubar text { font-family: Inter, sans-serif; }
.clock { letter-spacing: .5px; }

.desktop { flex: 1; min-height: 0; display: flex; padding: 2px 0 1px 12px; background: linear-gradient(180deg, #8a6a2c 0, #4f3d12 6%, #6f5420 14%, #54400f 30%, #6a5220 48%, #4d3a12 70%, #6b5527 100%); }
.window { flex: 1; min-width: 0; display: flex; flex-direction: column; border: 2px solid #b3b3b8; border-radius: 22px 22px 18px 18px; background: #3a3a3a; overflow: hidden; box-shadow: 0 0 0 2px #1d1505; }

/* browser tabs */
.tabstrip { height: 81px; flex: none; display: grid; align-items: center; background: #202020; color: #f2f2f2; font: 500 24px Inter, sans-serif;
  grid-template-columns: 103px 100px 74px repeat(11, 227.5px) 1fr; }
.tabstrip > svg:nth-child(1) { width: 50px; height: 50px; margin: 0 0 0 18px; }
.tabstrip > svg:nth-child(2) { width: 38px; height: 38px; margin-top: 6px; }
.tabstrip > svg:nth-child(3) { width: 36px; height: 36px; margin: 8px 0 0 1px; }
.tab { display: grid; grid-template-columns: 64px 114px 1fr; align-items: center; height: 68px; align-self: end; position: relative; padding-bottom: 2px; }
.tab > svg { width: 30px; height: 30px; margin-left: 14px; }
.tab > svg.lg { width: 32px; height: 32px; margin-left: 13px; }
.tab > svg.sm { width: 22px; height: 22px; margin-left: 18px; }
.tab > svg.x { width: 19px; height: 19px; margin-left: 11px; margin-top: 2px; }
.tab span { padding-left: 1px; letter-spacing: -.25px; -webkit-mask-image: linear-gradient(90deg, #000 68%, transparent 98%); mask-image: linear-gradient(90deg, #000 68%, transparent 98%); }
.tab.sep::before { content: ""; position: absolute; left: 0; top: 14px; width: 2px; height: 41px; background: #8a8a8a; }
.tab.active { background: #3a3a3a; border: 2px solid #9a9a9a; border-bottom: 0; border-radius: 14px 14px 0 0; margin-left: 1px; grid-template-columns: 61px 114px 1fr; padding-bottom: 4px; }
.tab.active > svg:first-child { margin-left: 11px; }
.tab.active::before, .tab.active::after { content: ""; position: absolute; bottom: 0; width: 18px; height: 20px; border: 2px solid #9a9a9a; border-top: 0; }
.tab.active::before { left: -18px; border-left: 0; border-bottom-right-radius: 16px; }
.tab.active::after { right: -18px; border-right: 0; border-bottom-left-radius: 16px; }
.tab.add > svg { width: 28px; height: 28px; margin-left: 29px; }

/* address row */
.toolbar { height: 78px; flex: none; display: flex; align-items: center; }
.toolbar svg { width: 36px; height: 36px; }
.navbtns { width: 286px; display: flex; gap: 52px; padding-left: 36px; }
.url { width: 2018px; height: 64px; border-radius: 32px; border: 2px solid #232323; background: #2a2a2a; display: grid; align-items: center; padding-left: 32px; grid-template-columns: 65px 1611px 80px 80px 80px 36px; }
.url p { font: 400 27px Inter, sans-serif; color: #9a9a9a; letter-spacing: .34px; }
.url b { font-weight: 500; color: #fff; }
.tools { display: grid; align-items: center; padding-left: 39px; grid-template-columns: 64px 30px 90px 88px 87px 88px 78px 50px; }
.tools i, .bookmarks i { width: 2px; height: 32px; background: #888; }
.tools svg:last-child { width: 50px; height: 46px; }
.tools svg:nth-child(6) { width: 40px; height: 40px; }

.bookmarks { height: 70px; flex: none; display: grid; align-items: center; padding: 0 0 4px 23px; color: #ececec; font: 500 23.500px Inter, sans-serif;
  grid-template-columns: 128px 307px 142px 139px 171px 180px 140px 307px 309px 307px 456px 51px 30px 1fr; }
.bookmarks a { display: flex; align-items: center; gap: 12px; letter-spacing: -.05px; }
.bookmarks a:last-child { letter-spacing: .1px; }
.bookmarks svg { width: 32px; height: 32px; }
.bookmarks svg.more { width: 16px; height: 28px; }

/* portal */
.page { flex: 1; min-height: 0; margin: 0 0 4px 7px; background: #fefefe; border-radius: 14px 8px 0 0; overflow: hidden; display: flex; flex-direction: column; }
.azbar { height: 80px; flex: none; background: #3374cd; display: flex; align-items: center; color: #fff; }
.burger { width: 29px; height: 22px; margin-left: 33px; margin-right: 74px; }
.brand { width: 270.500px; font-size: 29px; font-weight: 600; letter-spacing: -.25px; }
.upgrade { width: 165px; height: 53px; border-radius: 4px; background: #c9f3e2; color: #1c1c1c; display: flex; align-items: center; padding-left: 9px; gap: 12px; font-weight: 600; letter-spacing: -.1px; }
.upgrade svg { width: 30px; height: 30px; }
.azsearch { margin-left: 232px; width: 1039px; height: 53px; border-radius: 4px; background: #b9d4ef; color: #2d5a94; display: flex; align-items: center; gap: 20px; padding-left: 14px; letter-spacing: -.2px; }
.azsearch svg { width: 25px; height: 25px; }
.copilot { margin-left: 32px; width: 177px; height: 53px; border-radius: 5px; background: #fff; color: #25304a; display: flex; align-items: center; gap: 9px; padding-left: 23px; font-weight: 600; letter-spacing: .2px; }
.copilot svg { width: 33px; height: 31px; }
.azicons { display: grid; grid-template-columns: 79px 81px 80px 79px 36px; margin-left: 52px; align-items: center; }
.azicons svg { width: 36px; height: 36px; }
.azicons svg.pale { width: 34px; height: 32px; color: #e4f3fb; }
.bell { position: relative; }
.bell em { position: absolute; left: 18px; top: -13px; width: 31px; height: 31px; border-radius: 50%; background: #fff; color: #2b5f9f; font: 600 19px/31px "Open Sans", sans-serif; text-align: center; }
.account { margin-left: auto; margin-right: 13px; text-align: right; line-height: 32px; padding-top: 3px; }
.account span { display: block; font-size: 26.500px; letter-spacing: 0; }
.account small { display: block; font-size: 20px; line-height: 28px; font-weight: 600; letter-spacing: -.15px; padding-right: 5px; }
.avatar { width: 56px; height: 56px; margin-right: 7px; }

.crumbs { height: 43px; flex: none; display: flex; align-items: center; padding: 28px 0 0 40px; color: #2b6cb8; font-size: 26.600px; }
.crumbs svg { width: 12px; height: 20px; margin: 2px 16px 0 15px; color: #777; }
.crumbs a:last-child { letter-spacing: .3px; }
.blades { flex: 1; min-height: 0; display: flex; }

.list { width: 628px; flex: none; display: flex; flex-direction: column; padding-left: 29px; }
.lhead { display: flex; align-items: center; padding: 25px 0 0 11px; height: 92px; }
h1 { font-size: 47.500px; font-weight: 600; line-height: 60px; letter-spacing: -.85px; width: 508px; }
.lhead svg { width: 19px; height: 19px; }
.sub { padding-left: 11px; font-size: 23.500px; line-height: 32px; color: #6a6a6a; letter-spacing: -.45px; }
.lbar { position: relative; display: grid; align-items: center; grid-template-columns: 48px 107px 48px 226px 1fr; height: 74px; margin: 16px 39px 0 11px; padding: 0 0 1px 15px; letter-spacing: -.2px; }
.lbar::after { content: ""; position: absolute; left: 0; right: 0; bottom: -2px; height: 3px; background: #d6d6d6; }
.lbar svg { width: 32px; height: 32px; }
.lbar svg:nth-of-type(2) { width: 28px; height: 34px; }
.lbar svg.dots { width: 29px; height: 8px; }
.filter { width: 570px; height: 48px; margin-top: 31px; border: 2px solid #8a8a8a; border-radius: 4px; padding-left: 16px; line-height: 42px; color: #5e5e5e; font-size: 24px; letter-spacing: .1px; }
.colhead { height: 70px; display: flex; align-items: center; gap: 13px; padding: 0 0 2px 16px; font-weight: 600; letter-spacing: -.5px; }
.colhead svg { width: 34px; height: 26px; }
.row { height: 66px; background: linear-gradient(90deg, #ebeae9 96%, #dedddc); display: flex; align-items: center; padding: 2px 14px 0 17px; color: #1d4a78; gap: 17px; letter-spacing: -.05px; }
.row .ri { width: 34px; height: 38px; }
.row .rd { width: 34px; height: 10px; margin-left: auto; }
.pager { margin-top: auto; margin-bottom: 40px; height: 48px; display: flex; align-items: center; }
.pager button { width: 63px; height: 48px; border: 2px solid #999; background: #f0f0f0; border-radius: 3px; color: #777; font: 24px "Open Sans", sans-serif; }
.pager span { letter-spacing: -.1px; }
.pager span:nth-of-type(1) { width: 90px; padding-left: 19px; }
.pager span:nth-of-type(2) { width: 75px; padding-left: 11px; }
.select { width: 119px; height: 48px; border: 2px solid #888; border-radius: 3px; display: flex; align-items: center; justify-content: space-between; padding: 0 15px 0 18px; }
.select svg { width: 26px; height: 16px; }

.blade { flex: 1; min-width: 0; background: #fefefe; box-shadow: -2px 16px 22px rgba(0,0,0,.18); clip-path: inset(0 0 0 -30px); display: flex; flex-direction: column; }
.bhead { display: flex; height: 155px; flex: none; padding: 25px 0 0 41px; }
.bicon { width: 59px; height: 59px; margin-top: 22px; margin-right: 17px; }
.bhead > div:nth-child(2) { width: 941px; }
h2 { font-size: 47.500px; font-weight: 400; line-height: 66px; letter-spacing: -.7px; word-spacing: -5.500px; }
h2 b { font-weight: 600; letter-spacing: -.4px; }
.bhead p { font-size: 23.500px; line-height: 34px; color: #666; letter-spacing: -.3px; }
.hicons { display: grid; height: 70px; align-items: center; grid-template-columns: 62px 67px 1020px 26px; padding-left: 1px; color: #333; }
.hicons svg { width: 30px; height: 30px; }
.hicons svg:nth-child(2) { width: 36px; height: 36px; margin-left: -1px; }
.hicons svg.close { width: 26px; height: 26px; margin-top: 4px; }
.bbody { flex: 1; min-height: 0; display: flex; }
aside { width: 571px; flex: none; }
.find { display: flex; align-items: center; height: 48px; padding-left: 34px; }
.box { width: 374px; height: 48px; border: 2px solid #858585; border-radius: 4px; display: flex; align-items: center; gap: 13px; padding: 0 0 2px 9px; color: #606060; letter-spacing: -.2px; margin-right: 21px; }
.box svg { width: 25px; height: 25px; }
.find > svg { width: 20px; height: 20px; }
.find > svg:last-child { margin-left: 40px; }
ul { list-style: none; padding-top: 15px; width: 531px; }
li { height: 64px; position: relative; padding-left: 137px; line-height: 64px; letter-spacing: -.17px; }
li.two { height: 98px; line-height: 34.500px; padding-top: 14.500px; }
li > svg { position: absolute; left: 89px; top: 17px; width: 31px; height: 31px; }
li.two > svg { top: 35px; }
li > svg.wide { width: 34px; height: 34px; left: 88px; top: 16px; }
li.grp { padding-left: 89px; line-height: 63px; }
li.grp > svg { left: 45px; top: 19px; width: 24px; height: 24px; }
li.on { background: #ebeae9; border-left: 5px solid #3374cd; padding-left: 132px; font-weight: 600; letter-spacing: -.1px; }
li.on > svg.wide { left: 83px; }

main { flex: 1; min-width: 0; display: flex; flex-direction: column; }
.cmds { width: 1682px; height: 59px; border-bottom: 3px solid #d6d6d6; display: grid; padding: 0 0 10px 15px; align-items: center; letter-spacing: -.2px; color: #303030;
  grid-template-columns: 49px 162px 49px 75px 80px 80px 80px 80px 79px 49px 84px 49px 1fr; }
.cmds svg { width: 34px; height: 34px; color: #2f74c8; }
.cmds svg:nth-of-type(6), .cmds svg:nth-of-type(7) { width: 33px; height: 33px; }
.cmds span:last-child { letter-spacing: -.3px; }
.map { width: 1652px; height: 910px; margin-top: 36px; flex: none; overflow: hidden; }
.land path { fill: #dcdfe2; stroke: #c9ccd4; stroke-width: 1.500; vector-effect: non-scaling-stroke; stroke-linejoin: round; }
.sea path { fill: #fefefe; stroke: #c9ccd4; stroke-width: 1.500; vector-effect: non-scaling-stroke; }
.map .dots circle { stroke: rgba(0,0,0,.75); stroke-width: 2.600; }
.g { fill: rgba(60,151,38,.76); }
.l { fill: rgba(84,160,40,.75); }
.o { fill: rgba(160,186,58,.82); }
.y { fill: rgba(248,214,82,.82); }
.r { fill: rgba(212,50,50,.84); }
.stats { display: grid; align-items: start; padding: 14px 0 0 31px; grid-template-columns: 64px 226px 175px 248px 194px 167px 264px 1fr; }
.stats small { display: block; font-size: 19px; font-weight: 600; letter-spacing: -1.050px; line-height: 26px; }
.stats b { display: block; font-size: 50px; font-weight: 600; letter-spacing: -.3px; line-height: 57px; -webkit-text-stroke: .8px #262626; }
.pg { width: 32px; display: flex; flex-direction: column; align-items: center; padding-top: 6px; }
.pg svg { width: 24px; height: 14px; }
.pg span { font-size: 22px; line-height: 52px; letter-spacing: .2px; }
```
